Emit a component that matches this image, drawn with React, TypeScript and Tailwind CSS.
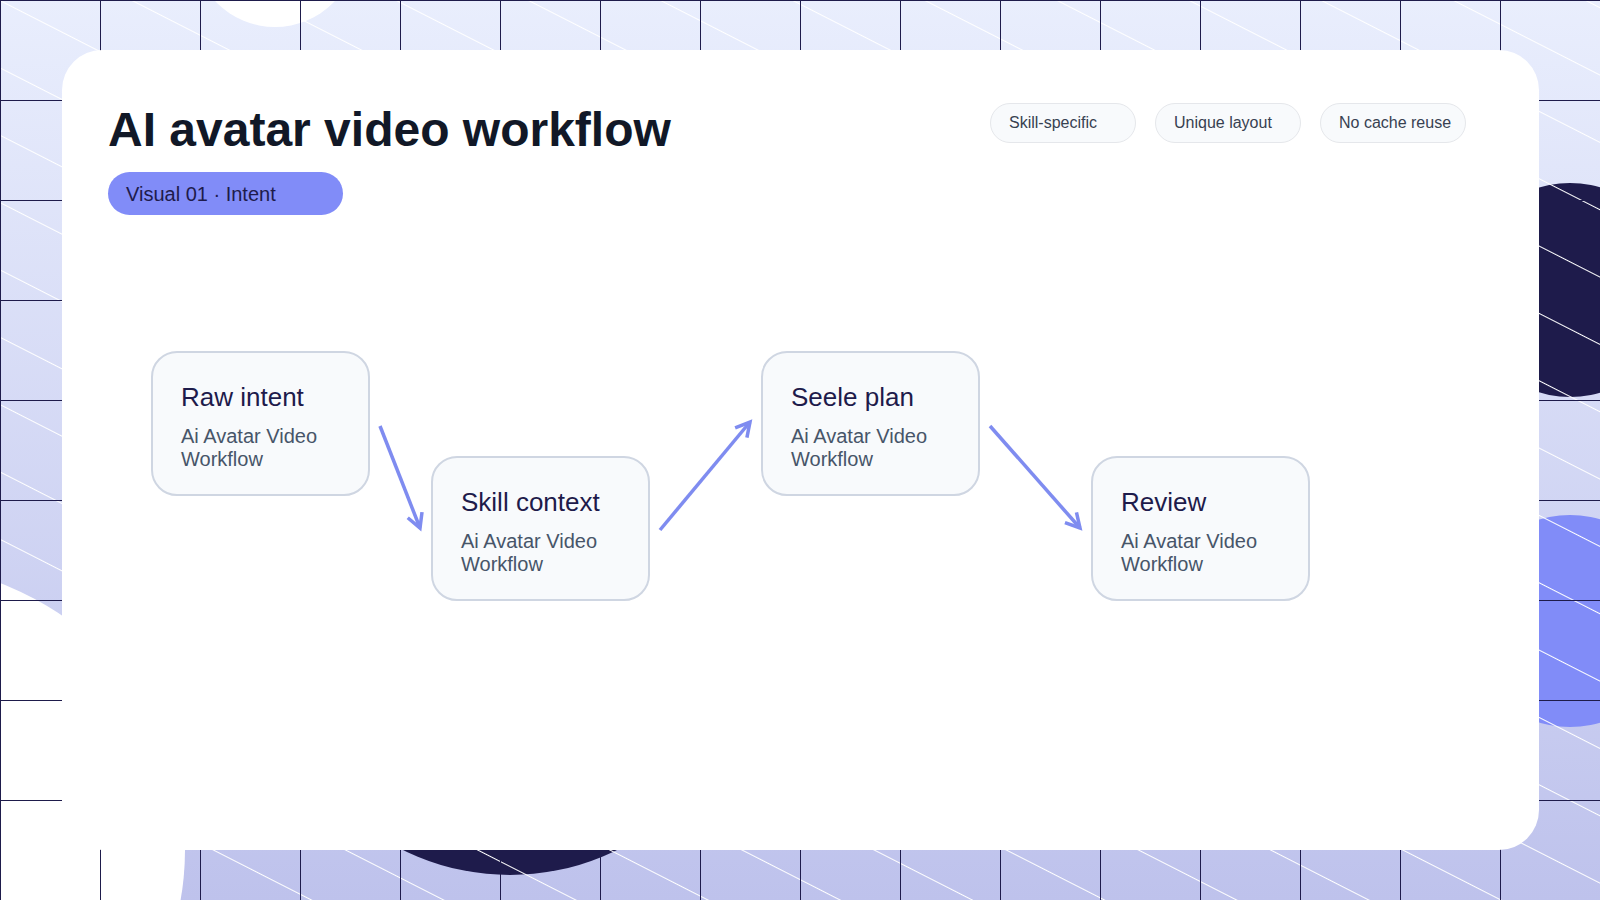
const nodes = [
  { title: "Raw intent", x: 151, y: 351 },
  { title: "Skill context", x: 431, y: 456 },
  { title: "Seele plan", x: 761, y: 351 },
  { title: "Review", x: 1091, y: 456 },
];

const arrows = [
  { x1: 380, y1: 426, x2: 420, y2: 528 },
  { x1: 660, y1: 530, x2: 750, y2: 422 },
  { x1: 990, y1: 426, x2: 1080, y2: 528 },
];

function Backdrop() {
  const xs = Array.from({ length: 17 }, (_, i) => i * 100);
  const ys = Array.from({ length: 10 }, (_, i) => i * 100);
  return (
    <svg className="absolute inset-0" width="1600" height="900" viewBox="0 0 1600 900">
      <defs>
        <linearGradient id="bg" x1="0" y1="0" x2="0" y2="1">
          <stop offset="0" stopColor="#e9eefd" />
          <stop offset="1" stopColor="#bec2ec" />
        </linearGradient>
        <pattern id="stripes" width="60" height="60" patternUnits="userSpaceOnUse" patternTransform="rotate(27)">
          <line x1="0" y1="0.5" x2="60" y2="0.5" stroke="#ffffff" strokeWidth="1.2" />
        </pattern>
      </defs>
      <rect width="1600" height="900" fill="url(#bg)" />
      <circle cx="275" cy="-55" r="82" fill="#ffffff" />
      <circle cx="-100" cy="850" r="285" fill="#ffffff" />
      <circle cx="510" cy="634" r="241" fill="#1e1b4b" />
      <circle cx="1570" cy="290" r="107" fill="#1e1b4b" />
      <circle cx="1570" cy="621" r="106" fill="#818cf8" />
      <rect width="1600" height="900" fill="url(#stripes)" />
      {xs.map((x) => (
        <line key={"x" + x} x1={x + 0.5} y1="0" x2={x + 0.5} y2="900" stroke="#1e1b4b" strokeWidth="1" />
      ))}
      {ys.map((y) => (
        <line key={"y" + y} x1="0" y1={y + 0.5} x2="1600" y2={y + 0.5} stroke="#1e1b4b" strokeWidth="1" />
      ))}
    </svg>
  );
}

export default function App() {
  return (
    <div className="relative w-[1600px] h-[900px] overflow-hidden font-[family-name:Liberation_Sans,Arial,sans-serif]">
      <Backdrop />
      <div className="absolute left-[62px] top-[50px] w-[1477px] h-[800px] bg-white rounded-[40px]">
        <div className="flex items-start justify-between pl-[46px] pr-[73px] pt-[50px]">
          <div className="flex flex-col gap-[12px]">
            <h1 className="text-[48px] leading-[60px] font-bold text-[#111827]">AI avatar video workflow</h1>
            <div className="w-[235px] h-[43px] rounded-full bg-[#818cf8] flex items-center pl-[18px] text-[20px] text-[#1e1b4b]">
              Visual 01 · Intent
            </div>
          </div>
          <div className="flex gap-[19px] pt-[3px]">
            {["Skill-specific", "Unique layout", "No cache reuse"].map((t) => (
              <div key={t} className="w-[146px] h-[40px] rounded-full border border-[#e5e7eb] bg-[#f8fafc] flex items-center pl-[18px] text-[16px] text-[#374151]">
                {t}
              </div>
            ))}
          </div>
        </div>
      </div>
      <svg className="absolute inset-0 pointer-events-none" width="1600" height="900">
        {arrows.map((a, i) => {
          const ang = Math.atan2(a.y2 - a.y1, a.x2 - a.x1);
          const l = 16;
          const p1 = [a.x2 - l * Math.cos(ang - 0.5), a.y2 - l * Math.sin(ang - 0.5)];
          const p2 = [a.x2 - l * Math.cos(ang + 0.5), a.y2 - l * Math.sin(ang + 0.5)];
          return (
            <g key={i} stroke="#7f8cf0" strokeWidth="3.5" fill="none" strokeLinecap="butt">
              <line x1={a.x1} y1={a.y1} x2={a.x2} y2={a.y2} />
              <polyline points={`${p1[0]},${p1[1]} ${a.x2},${a.y2} ${p2[0]},${p2[1]}`} />
            </g>
          );
        })}
      </svg>
      {nodes.map((n) => (
        <div
          key={n.title}
          className="absolute w-[219px] h-[145px] rounded-[26px] border-2 border-[#cfd6e2] bg-[#f8fafc] flex flex-col justify-center pl-[28px] pt-[4px]"
          style={{ left: n.x, top: n.y }}
        >
          <div className="text-[26px] leading-[32px] text-[#1e1b4b]">{n.title}</div>
          <div className="mt-[12px] text-[20px] leading-[23px] text-[#475569]">
            Ai Avatar Video
            <br />
            Workflow
          </div>
        </div>
      ))}
    </div>
  );
}
